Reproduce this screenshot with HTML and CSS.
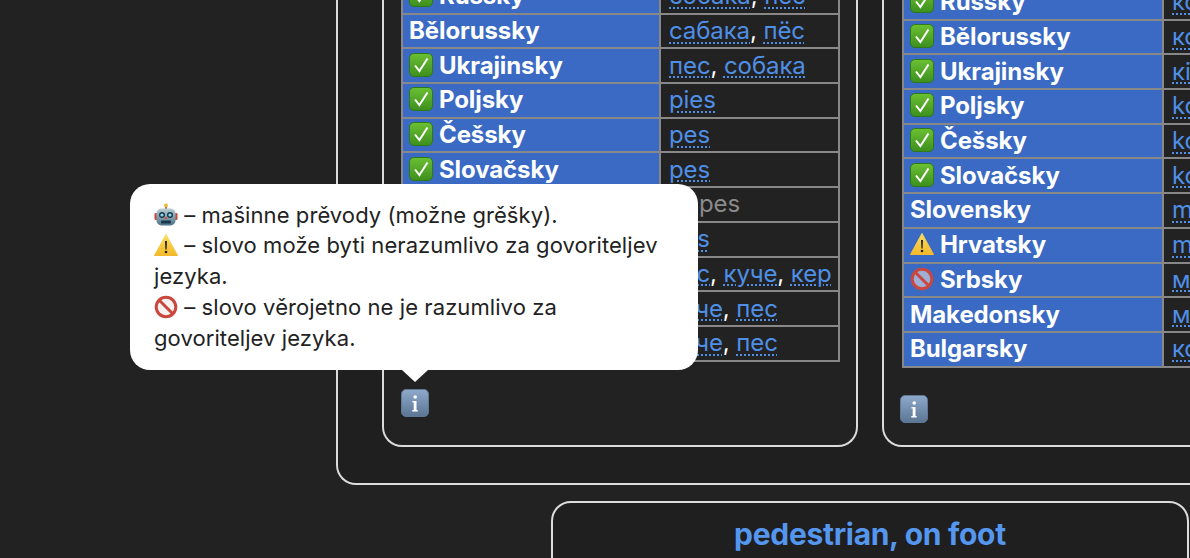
FILE: index.html
```html
<!DOCTYPE html>
<html lang="en">
<head>
  <meta charset="UTF-8">
  <title>Slovo</title>
  <link rel="stylesheet" href="styles.css">
</head>
<body>
  <svg class="defs" width="0" height="0">
    <defs>
      <linearGradient id="okFill" x1="0" y1="0" x2="0" y2="1"><stop offset="0" stop-color="#6cc033"/><stop offset="1" stop-color="#3c8f1e"/></linearGradient>
      <linearGradient id="warnFill" x1="0" y1="0" x2="0" y2="1"><stop offset="0" stop-color="#fbdc5e"/><stop offset="1" stop-color="#f3b92c"/></linearGradient>
      <linearGradient id="infoFill" x1="0" y1="0" x2="0" y2="1"><stop offset="0" stop-color="#8fa9cb"/><stop offset="1" stop-color="#5b7594"/></linearGradient>
      <linearGradient id="botFill" x1="0" y1="0" x2="0" y2="1"><stop offset="0" stop-color="#b9cdd6"/><stop offset="1" stop-color="#4f7488"/></linearGradient>
      <symbol id="ok" viewBox="0 0 24 24">
        <rect x="0.5" y="0.5" width="23" height="23" rx="4.5" fill="url(#okFill)" stroke="#2f7a18"/>
        <path d="M6 12.5l4.4 5.5L18.5 5.5" fill="none" stroke="#fff" stroke-width="2"/>
      </symbol>
      <symbol id="warn" viewBox="0 0 24 24">
        <path d="M12 1.5L23.5 22.5H0.5Z" fill="url(#warnFill)" stroke="url(#warnFill)" stroke-linejoin="round"/>
        <path d="M11 8h2l-.4 8.5h-1.2Z" fill="#222"/>
        <circle cx="12" cy="19" r="1.3" fill="#222"/>
      </symbol>
      <symbol id="ban" viewBox="0 0 24 24">
        <circle cx="12" cy="12" r="9.8" fill="#f0e6e6" fill-opacity=".55" stroke="#c9473c" stroke-width="3"/>
        <path d="M5 5l14 14" stroke="#c9473c" stroke-width="3"/>
      </symbol>
      <symbol id="bot" viewBox="0 0 24 24">
        <rect x="0.5" y="10" width="3" height="7" rx="1.2" fill="#c9473c"/>
        <rect x="20.5" y="10" width="3" height="7" rx="1.2" fill="#c9473c"/>
        <rect x="11" y="2.5" width="2" height="4" fill="#8b6a3a"/>
        <circle cx="12" cy="2.5" r="2" fill="#f0b840"/>
        <rect x="2.5" y="5.5" width="19" height="17" rx="5" fill="url(#botFill)"/>
        <circle cx="8" cy="12" r="3" fill="#17394a"/>
        <circle cx="16" cy="12" r="3" fill="#17394a"/>
        <circle cx="8" cy="12" r="1.6" fill="#8fd8f0"/>
        <circle cx="16" cy="12" r="1.6" fill="#8fd8f0"/>
        <path d="M12 13l1.5 3h-3Z" fill="#d9473a"/>
        <rect x="7" y="17.5" width="10" height="3" rx="1" fill="#17394a"/>
      </symbol>
      <symbol id="info" viewBox="0 0 28 28">
        <rect x="0.5" y="0.5" width="27" height="27" rx="4.5" fill="url(#infoFill)" stroke="#5f7896"/>
        <circle cx="14.2" cy="8" r="1.8" fill="#fff"/>
        <path d="M11.5 12h4v9h1.2v1.5h-5.4V21h1.4v-7.6h-1.2Z" fill="#fff"/>
      </symbol>
    </defs>
  </svg>

  <div class="page">
    <section class="group">
      <div class="card">
        <table class="words">
          <tr><th><svg class="emoji"><use href="#ok"/></svg>Russky</th><td><a>собака</a>, <a>пёс</a></td></tr>
          <tr><th>Bělorussky</th><td><a>сабака</a>, <a>пёс</a></td></tr>
          <tr><th><svg class="emoji"><use href="#ok"/></svg>Ukrajinsky</th><td><a>пес</a>, <a>собака</a></td></tr>
          <tr><th><svg class="emoji"><use href="#ok"/></svg>Poljsky</th><td><a>pies</a></td></tr>
          <tr><th><svg class="emoji"><use href="#ok"/></svg>Češsky</th><td><a>pes</a></td></tr>
          <tr><th><svg class="emoji"><use href="#ok"/></svg>Slovačsky</th><td><a>pes</a></td></tr>
          <tr><th>Slovensky</th><td class="machine"><svg class="emoji"><use href="#bot"/></svg>pes</td></tr>
          <tr><th><svg class="emoji"><use href="#ok"/></svg>Hrvatsky</th><td><a>pas</a></td></tr>
          <tr><th><svg class="emoji"><use href="#ok"/></svg>Srbsky</th><td><a>пас</a>, <a>куче</a>, <a>кер</a></td></tr>
          <tr><th>Makedonsky</th><td><a>куче</a>, <a>пес</a></td></tr>
          <tr><th>Bulgarsky</th><td><a>куче</a>, <a>пес</a></td></tr>
        </table>
        <div class="info">
          <svg class="info-icon"><use href="#info"/></svg>
          <div class="tip">
            <p><svg class="tip-emoji"><use href="#bot"/></svg> – mašinne prěvody (možne grěšky).</p>
            <p><svg class="tip-emoji"><use href="#warn"/></svg> – slovo može byti nerazumlivo za govoriteljev jezyka.</p>
            <p><svg class="tip-emoji"><use href="#ban"/></svg> – slovo věrojetno ne je razumlivo za govoriteljev jezyka.</p>
          </div>
        </div>
      </div>

      <div class="card card-low">
        <table class="words">
          <tr><th><svg class="emoji"><use href="#ok"/></svg>Russky</th><td><a>кот</a>, <a>кошка</a></td></tr>
          <tr><th><svg class="emoji"><use href="#ok"/></svg>Bělorussky</th><td><a>кот</a>, <a>кошка</a></td></tr>
          <tr><th><svg class="emoji"><use href="#ok"/></svg>Ukrajinsky</th><td><a>кіт</a>, <a>кішка</a></td></tr>
          <tr><th><svg class="emoji"><use href="#ok"/></svg>Poljsky</th><td><a>kot</a></td></tr>
          <tr><th><svg class="emoji"><use href="#ok"/></svg>Češsky</th><td><a>kočka</a></td></tr>
          <tr><th><svg class="emoji"><use href="#ok"/></svg>Slovačsky</th><td><a>kocka</a></td></tr>
          <tr><th>Slovensky</th><td><a>mačka</a></td></tr>
          <tr><th><svg class="emoji"><use href="#warn"/></svg>Hrvatsky</th><td><a>mačka</a></td></tr>
          <tr><th><svg class="emoji"><use href="#ban"/></svg>Srbsky</th><td><a>мачка</a></td></tr>
          <tr><th>Makedonsky</th><td><a>мачка</a></td></tr>
          <tr><th>Bulgarsky</th><td><a>котка</a></td></tr>
        </table>
        <div class="info">
          <svg class="info-icon"><use href="#info"/></svg>
        </div>
      </div>
    </section>

    <section class="next-word">
      <h2>pedestrian, on foot</h2>
    </section>
  </div>
</body>
</html>
```

FILE: styles.css
```css
html, body { margin:0; height:100%; overflow:hidden; }
body { background:#222222; font-family:"Inter","Liberation Sans",sans-serif; color:#fff; }
.defs { position:absolute; }
.page { width:1190px; margin-top:-60px; }

.group { display:flex; gap:24px; width:1000px; margin-left:336px; padding:0 44px 36px; background:#1f1f1f; border:2px solid #dcdcdc; border-top:0; border-radius:0 0 20px 20px; box-sizing:border-box; }
.card { flex:none; width:476px; box-sizing:border-box; padding:38px 17px 0; background:#222222; border:2px solid #dcdcdc; border-top:0; border-radius:0 0 20px 20px; }
.card-low { padding:44px 17px 22px 18px; }
.card-low .info { margin-left:-2px; }
.card-low .words th { width:245px; }

.words { width:439px; table-layout:fixed; border-collapse:collapse; font-size:24px; letter-spacing:-.1px; border:2px solid #888; }
.words tr { height:34.7px; }
.words th, .words td { padding:0 7px; border:2px solid #888; text-align:left; white-space:nowrap; line-height:30px; overflow:hidden; }
.words th { width:243px; padding-left:6px; background:#3a6ac4; font-weight:700; color:#fff; }
.words td { padding-left:8px; background:#222222; }
.words a { color:#4f8fe6; text-decoration:underline dotted; text-underline-offset:3px; text-decoration-thickness:2px; }
.words .machine { color:#8a8a8a; }

.emoji { width:24px; height:24px; margin-right:6px; vertical-align:-3px; }

.info { position:relative; width:28px; margin-top:27px; }
.info-icon { display:block; width:28px; height:28px; }

.tip { position:absolute; left:-271px; bottom:48px; margin-bottom:-1px; width:568px; box-sizing:border-box; padding:16px 24px; background:#fff; color:#222; border-radius:20px; font-size:22px; line-height:30.8px; letter-spacing:.08px; }
.tip::after { content:""; position:absolute; left:272px; top:100%; border:13px solid transparent; border-bottom:0; border-top:12px solid #fff; }
.tip p { margin:0; }
.tip-emoji { width:24px; height:24px; vertical-align:-4px; }

.next-word { width:638px; box-sizing:border-box; margin:16px 0 0 551px; padding:12px 0 40px; background:#1f1f1f; border:2px solid #dcdcdc; border-radius:20px; text-align:center; }
.next-word h2 { margin:0; color:#5596ee; font-size:30px; line-height:38px; font-weight:700; letter-spacing:-.3px; }
```
